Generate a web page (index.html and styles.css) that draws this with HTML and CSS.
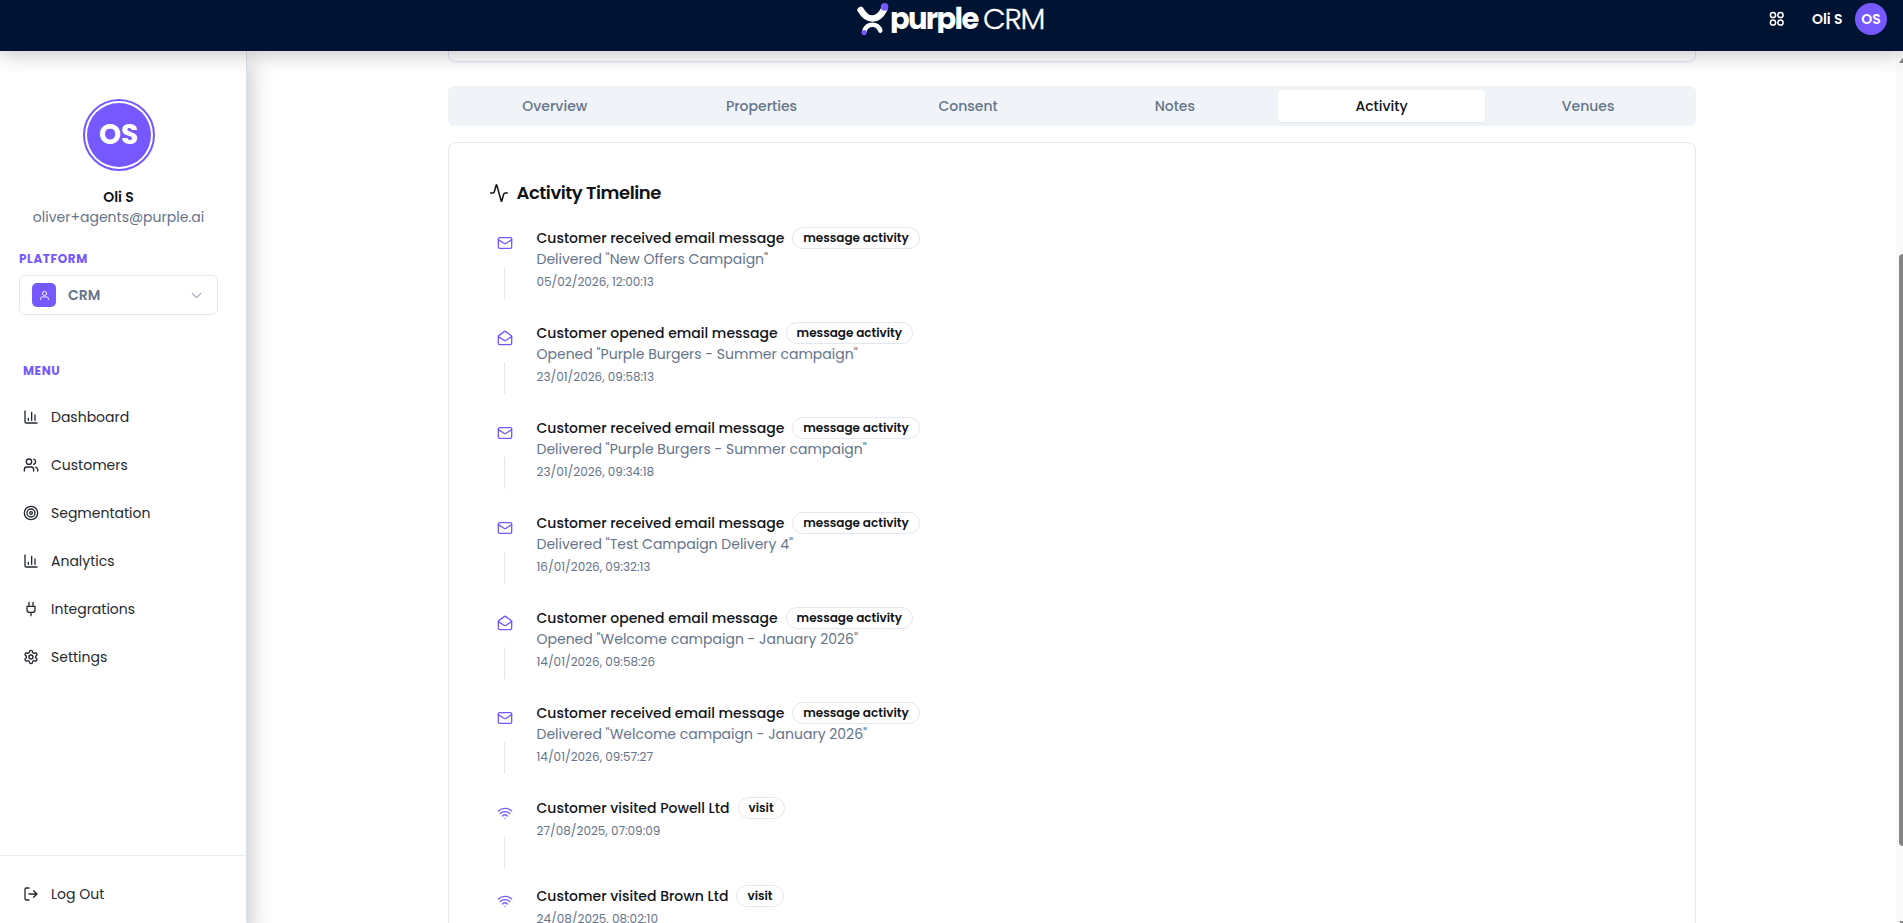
FILE: index.html
```html
<!DOCTYPE html>
<html lang="en">
<head>
<meta charset="utf-8">
<title>Purple CRM</title>
<link rel="stylesheet" href="styles.css">
</head>
<body>
<svg class="sprite" aria-hidden="true">
  <symbol id="chart" viewBox="0 0 24 24"><path d="M3 3v16a2 2 0 0 0 2 2h16M18 17V9M13 17V5M8 17v-3"/></symbol>
  <symbol id="users" viewBox="0 0 24 24"><path d="M16 21v-2a4 4 0 0 0-4-4H6a4 4 0 0 0-4 4v2"/><circle cx="9" cy="7" r="4"/><path d="M22 21v-2a4 4 0 0 0-3-3.87M16 3.13a4 4 0 0 1 0 7.75"/></symbol>
  <symbol id="target" viewBox="0 0 24 24"><circle cx="12" cy="12" r="10"/><circle cx="12" cy="12" r="6"/><circle cx="12" cy="12" r="2"/></symbol>
  <symbol id="plug" viewBox="0 0 24 24"><path d="M12 22v-5M9 8V2M15 8V2M18 8v5a4 4 0 0 1-4 4h-4a4 4 0 0 1-4-4V8Z"/></symbol>
  <symbol id="gear" viewBox="0 0 24 24"><path d="M12.22 2h-.44a2 2 0 0 0-2 2v.18a2 2 0 0 1-1 1.73l-.43.25a2 2 0 0 1-2 0l-.15-.08a2 2 0 0 0-2.73.73l-.22.38a2 2 0 0 0 .73 2.73l.15.1a2 2 0 0 1 1 1.72v.51a2 2 0 0 1-1 1.74l-.15.09a2 2 0 0 0-.73 2.73l.22.38a2 2 0 0 0 2.73.73l.15-.08a2 2 0 0 1 2 0l.43.25a2 2 0 0 1 1 1.73V20a2 2 0 0 0 2 2h.44a2 2 0 0 0 2-2v-.18a2 2 0 0 1 1-1.73l.43-.25a2 2 0 0 1 2 0l.15.08a2 2 0 0 0 2.73-.73l.22-.39a2 2 0 0 0-.73-2.73l-.15-.08a2 2 0 0 1-1-1.74v-.5a2 2 0 0 1 1-1.74l.15-.09a2 2 0 0 0 .73-2.73l-.22-.38a2 2 0 0 0-2.73-.73l-.15.08a2 2 0 0 1-2 0l-.43-.25a2 2 0 0 1-1-1.73V4a2 2 0 0 0-2-2z"/><circle cx="12" cy="12" r="3"/></symbol>
  <symbol id="logout" viewBox="0 0 24 24"><path d="M9 21H5a2 2 0 0 1-2-2V5a2 2 0 0 1 2-2h4M16 17l5-5-5-5M21 12H9"/></symbol>
  <symbol id="mail" viewBox="0 0 24 24"><rect x="2" y="4" width="20" height="16" rx="2"/><path d="m22 7-8.97 5.7a1.94 1.94 0 0 1-2.06 0L2 7"/></symbol>
  <symbol id="open" viewBox="0 0 24 24"><path d="M21.2 8.4c.5.38.8.97.8 1.6v10a2 2 0 0 1-2 2H4a2 2 0 0 1-2-2V10a2 2 0 0 1 .8-1.6l8-6a2 2 0 0 1 2.4 0l8 6Z"/><path d="m22 10-8.97 5.7a1.94 1.94 0 0 1-2.06 0L2 10"/></symbol>
  <symbol id="wifi" viewBox="0 0 24 24"><path d="M12 20h.01M2 8.82a15 15 0 0 1 20 0M5 12.859a10 10 0 0 1 14 0M8.5 16.429a5 5 0 0 1 7 0"/></symbol>
  <symbol id="pulse" viewBox="0 0 24 24"><path d="M22 12h-2.48a2 2 0 0 0-1.93 1.46l-2.35 8.36a.25.25 0 0 1-.48 0L9.24 2.18a.25.25 0 0 0-.48 0l-2.35 8.36A2 2 0 0 1 4.49 12H2"/></symbol>
</svg>

<header class="topbar">
  <div class="brand">
    <svg class="mark" viewBox="0 0 32 34"><path d="M3.700 8Q8.500 16.500 15.500 16.500T27 7.500" stroke="#fff" stroke-width="6.600"/><path d="M7.300 29Q9.500 22.800 15.300 22.800T23.300 28.500" stroke="#fff" stroke-width="4.600"/><circle cx="27.600" cy="4.900" r="3.800" fill="#7559ff"/><circle cx="7.100" cy="30.600" r="2.600" fill="#7559ff"/></svg>
    <span class="word">purple</span><span class="crm">CRM</span>
  </div>
  <div class="account">
    <svg class="grid-icon" viewBox="0 0 16 16"><circle cx="4" cy="4" r="2.600"/><circle cx="11.500" cy="4" r="2.600"/><circle cx="4" cy="11.500" r="2.600"/><circle cx="11.500" cy="11.500" r="2.600"/></svg>
    <span class="account-name">Oli S</span>
    <span class="avatar-small">OS</span>
  </div>
</header>

<div class="shell">
  <aside class="sidebar">
    <div class="profile">
      <div class="avatar"><span>OS</span></div>
      <div class="profile-name">Oli S</div>
      <div class="profile-mail">oliver+agents@purple.ai</div>
    </div>
    <div class="section-label platform-label">PLATFORM</div>
    <div class="select">
      <span class="select-badge"><svg viewBox="0 0 24 24"><circle cx="12" cy="7.500" r="4.500"/><path d="M3.500 21v-2a4 4 0 0 1 4-4h9a4 4 0 0 1 4 4v2"/></svg></span>
      <span class="select-text">CRM</span>
      <svg class="chevron" viewBox="0 0 24 24"><path d="m4 8 8 8 8-8"/></svg>
    </div>
    <div class="section-label menu-label">MENU</div>
    <nav class="menu">
      <a><svg><use href="#chart"/></svg><span>Dashboard</span></a>
      <a><svg><use href="#users"/></svg><span>Customers</span></a>
      <a><svg><use href="#target"/></svg><span>Segmentation</span></a>
      <a><svg><use href="#chart"/></svg><span>Analytics</span></a>
      <a><svg><use href="#plug"/></svg><span>Integrations</span></a>
      <a><svg><use href="#gear"/></svg><span>Settings</span></a>
    </nav>
    <div class="logout"><svg><use href="#logout"/></svg><span>Log Out</span></div>
  </aside>

  <main class="content">
    <div class="summary-card"></div>
    <div class="tabs">
      <span>Overview</span><span>Properties</span><span>Consent</span><span>Notes</span><span class="active">Activity</span><span>Venues</span>
    </div>
    <section class="card">
      <h2><svg><use href="#pulse"/></svg><span>Activity Timeline</span></h2>
      <div class="event"><div class="rail"><svg><use href="#mail"/></svg><i></i></div><div><div class="row"><span class="title">Customer received email message</span><span class="pill">message activity</span></div><p>Delivered "New Offers Campaign"</p><time>05/02/2026, 12:00:13</time></div></div>
      <div class="event"><div class="rail"><svg><use href="#open"/></svg><i></i></div><div><div class="row"><span class="title">Customer opened email message</span><span class="pill">message activity</span></div><p>Opened "Purple Burgers - Summer campaign"</p><time>23/01/2026, 09:58:13</time></div></div>
      <div class="event"><div class="rail"><svg><use href="#mail"/></svg><i></i></div><div><div class="row"><span class="title">Customer received email message</span><span class="pill">message activity</span></div><p>Delivered "Purple Burgers - Summer campaign"</p><time>23/01/2026, 09:34:18</time></div></div>
      <div class="event"><div class="rail"><svg><use href="#mail"/></svg><i></i></div><div><div class="row"><span class="title">Customer received email message</span><span class="pill">message activity</span></div><p>Delivered "Test Campaign Delivery 4"</p><time>16/01/2026, 09:32:13</time></div></div>
      <div class="event"><div class="rail"><svg><use href="#open"/></svg><i></i></div><div><div class="row"><span class="title">Customer opened email message</span><span class="pill">message activity</span></div><p>Opened "Welcome campaign - January 2026"</p><time>14/01/2026, 09:58:26</time></div></div>
      <div class="event"><div class="rail"><svg><use href="#mail"/></svg><i></i></div><div><div class="row"><span class="title">Customer received email message</span><span class="pill">message activity</span></div><p>Delivered "Welcome campaign - January 2026"</p><time>14/01/2026, 09:57:27</time></div></div>
      <div class="event visit"><div class="rail"><svg><use href="#wifi"/></svg><i></i></div><div><div class="row"><span class="title">Customer visited Powell Ltd</span><span class="pill">visit</span></div><time>27/08/2025, 07:09:09</time></div></div>
      <div class="event visit"><div class="rail"><svg><use href="#wifi"/></svg><i></i></div><div><div class="row"><span class="title">Customer visited Brown Ltd</span><span class="pill">visit</span></div><time>24/08/2025, 08:02:10</time></div></div>
    </section>
  </main>
  <div class="scrollbar"><div class="arrow"></div><div class="thumb"></div><div class="arrow down"></div></div>
</div>
</body>
</html>
```
FILE: styles.css
```css
* { box-sizing: border-box; }
body { margin: 0; height: 923px; overflow: hidden; display: flex; flex-direction: column; background: #fff; color: #101418; font-family: Poppins, Inter, sans-serif; font-size: 14px; }
svg { fill: none; stroke: currentColor; stroke-width: 2; stroke-linecap: round; stroke-linejoin: round; flex: none; }
.sprite { position: absolute; width: 0; height: 0; }

.topbar { height: 51px; flex: none; background: #001333; color: #fff; display: grid; grid-template-columns: 1fr auto 1fr; position: relative; z-index: 3; box-shadow: 0 4px 20px rgba(0,0,0,.22); }
.brand { grid-column: 2; display: flex; width: 189px; height: 38px; }
.mark { width: 32px; height: 34px; margin-top: 2px; }
.mark circle { stroke: none; }
.word { font-size: 29px; line-height: 38px; font-weight: 700; letter-spacing: -1.7px; width: 94px; padding-left: 1px; clip-path: inset(0 0 5px 0); }
.crm { font-size: 29.5px; line-height: 37px; font-weight: 300; letter-spacing: -1.3px; -webkit-text-stroke: .3px #fff; }
.account { display: flex; align-items: center; justify-content: flex-end; height: 38px; padding-right: 16px; }
.grid-icon { width: 16px; height: 16px; stroke-width: 1.5; margin-right: 27px; }
.account-name { font-size: 14px; font-weight: 600; letter-spacing: -.05px; width: 31px; white-space: nowrap; margin-right: 12px; }
.avatar-small { width: 32px; height: 32px; border-radius: 50%; background: #7559ff; display: grid; place-items: center; font-weight: 600; font-size: 14px; }

.shell { flex: 1; min-height: 0; display: flex; overflow: hidden; }
.sidebar { width: 247px; flex: none; border-right: 1px solid #dce2e9; box-shadow: 4px 12px 20px rgba(0,0,0,.22); background: #fff; display: flex; flex-direction: column; z-index: 2; position: relative; }
.profile { display: flex; flex-direction: column; align-items: center; width: 237px; padding-top: 48px; }
.avatar { width: 72px; height: 72px; border: 2px solid #7559ff; border-radius: 50%; padding: 2px; }
.avatar span { width: 64px; height: 64px; border-radius: 50%; background: #7559ff; color: #fff; font-size: 28px; font-weight: 700; display: grid; place-items: center; }
.profile-name { font-weight: 600; line-height: 20px; margin-top: 16px; }
.profile-mail { color: #64748b; line-height: 20px; }
.section-label { color: #7559ff; font-size: 12px; line-height: 18px; font-weight: 700; letter-spacing: .6px; }
.platform-label { margin: 23px 0 0 19px; }
.select { margin: 7px 0 0 19px; width: 199px; height: 40px; border: 1px solid #e2e8f0; border-radius: 6px; display: flex; align-items: center; padding: 0 14px 0 12px; }
.select-badge { width: 24px; height: 24px; border-radius: 5px; background: #7559ff; color: #fff; display: grid; place-items: center; }
.select-badge svg { width: 11px; height: 11px; }
.select-text { color: #64748b; font-weight: 600; margin-left: 12px; flex: 1; }
.chevron { width: 13px; height: 13px; color: #9aa5b5; }
.menu-label { margin: 47px 0 0 23px; }
.menu { margin-top: 13px; }
.menu a, .logout { display: flex; align-items: center; height: 48px; padding-left: 23px; gap: 12px; color: #24292f; }
.menu svg, .logout svg { width: 16px; height: 16px; }
.logout { margin-top: auto; height: 68px; border-top: 1px solid #eceff1; padding-top: 9px; }

.content { flex: 1; min-width: 0; padding-left: 200.5px; }
.content > * { width: 1248px; }
.summary-card { height: 11px; border: 1px solid #e2e4f1; border-top: 0; border-radius: 0 0 8px 8px; box-shadow: 0 1px 2px rgba(117,89,255,.1); }
.tabs { margin-top: 24px; height: 40px; padding: 4px; border-radius: 6px; background: #f0f4f9; display: grid; grid-template-columns: repeat(6, 1fr); color: #64748b; font-weight: 500; }
.tabs span { display: grid; place-items: center; border-radius: 4px; }
.tabs .active { background: #fff; color: #101418; box-shadow: 0 1px 2px rgba(0,0,0,.05); }
.card { margin-top: 16px; height: 900px; border: 1px solid #e2e8f0; border-radius: 8px; padding: 36px 40px; }
h2 { display: flex; align-items: center; gap: 8px; height: 28px; margin: 0 0 20px; font-size: 18px; font-weight: 600; letter-spacing: -.45px; }
h2 svg { width: 20px; height: 20px; stroke-width: 1.8; }
h2 span { line-height: 18px; padding-bottom: 1px; }
.event { display: flex; height: 95px; }
.visit { height: 88px; }
.rail { width: 32px; margin-right: 16px; display: flex; flex-direction: column; align-items: center; color: #7559ff; padding-top: 8px; }
.rail svg { width: 16px; height: 16px; }
.rail i { width: 1px; height: 32px; background: #e2e8f0; margin: 16px 0 0; }
.row { display: flex; align-items: center; height: 22px; }
.title { font-weight: 500; white-space: nowrap; }
.pill { border: 1px solid #e2e8f0; border-radius: 11px; height: 22px; padding: 0 10px; margin-left: 8px; font-size: 12px; line-height: 20px; font-weight: 600; white-space: nowrap; }
p { margin: 0; color: #64748b; line-height: 20px; }
time { display: block; margin-top: 4px; color: #64748b; font-size: 12px; line-height: 18px; }
.visit time { margin-top: 3px; }
.scrollbar { width: 7px; flex: none; margin-left: auto; background: #fafafa; overflow: hidden; }
.arrow { width: 10px; height: 7px; margin: 5px 0 0 3px; background: #858585; clip-path: polygon(50% 0, 100% 100%, 0 100%); }
.thumb { width: 8px; height: 592px; margin: 191px 0 0 3px; background: #858585; border-radius: 4px; }
.arrow.down { margin-top: 75px; clip-path: polygon(0 0, 100% 0, 50% 100%); }
```
